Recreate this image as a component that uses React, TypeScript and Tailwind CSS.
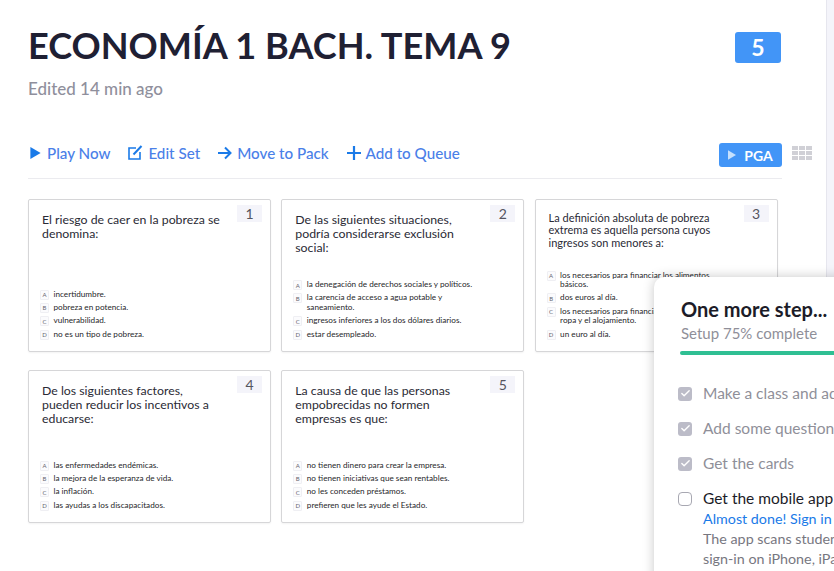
import React from 'react';
import { Check } from 'lucide-react';

type Card = {
  num: number;
  question: string;
  small?: boolean;
  answers: string[];
};

const cards: Card[] = [
  {
    num: 1,
    question: 'El riesgo de caer en la pobreza se denomina:',
    answers: ['incertidumbre.', 'pobreza en potencia.', 'vulnerabilidad.', 'no es un tipo de pobreza.'],
  },
  {
    num: 2,
    question: 'De las siguientes situaciones, podría considerarse exclusión social:',
    answers: [
      'la denegación de derechos sociales y políticos.',
      'la carencia de acceso a agua potable y saneamiento.',
      'ingresos inferiores a los dos dólares diarios.',
      'estar desempleado.',
    ],
  },
  {
    num: 3,
    small: true,
    question: 'La definición absoluta de pobreza extrema es aquella persona cuyos ingresos son menores a:',
    answers: [
      'los necesarios para financiar los alimentos básicos.',
      'dos euros al día.',
      'los necesarios para financiar los alimentos, la ropa y el alojamiento.',
      'un euro al día.',
    ],
  },
  {
    num: 4,
    question: 'De los siguientes factores, pueden reducir los incentivos a educarse:',
    answers: [
      'las enfermedades endémicas.',
      'la mejora de la esperanza de vida.',
      'la inflación.',
      'las ayudas a los discapacitados.',
    ],
  },
  {
    num: 5,
    question: 'La causa de que las personas empobrecidas no formen empresas es que:',
    answers: [
      'no tienen dinero para crear la empresa.',
      'no tienen iniciativas que sean rentables.',
      'no les conceden préstamos.',
      'prefieren que les ayude el Estado.',
    ],
  },
];

const PlayIcon = ({ className }: { className: string }) => (
  <svg viewBox="0 0 12 14" className={className} fill="currentColor">
    <path d="M0 0 L12 7 L0 14 Z" />
  </svg>
);

const EditIcon = () => (
  <svg viewBox="0 0 15 15" className="h-[15px] w-[15px] text-[#1a7ae8]" fill="none" stroke="currentColor">
    <path d="M8 3 H1 V14 H12 V7" strokeWidth="1.6" />
    <path d="M5.5 9.5 L13.5 1" strokeWidth="2" />
  </svg>
);

const ArrowIcon = () => (
  <svg viewBox="0 0 14 14" className="h-[14px] w-[14px] text-[#1a7ae8]" fill="none" stroke="currentColor" strokeWidth="2">
    <path d="M0 7 H12.5" />
    <path d="M7 1.5 L12.5 7 L7 12.5" />
  </svg>
);

const PlusIcon = () => (
  <svg viewBox="0 0 14 14" className="h-[14px] w-[14px] text-[#1a7ae8]" fill="none" stroke="currentColor" strokeWidth="2.2">
    <path d="M0 7 H14 M7 0 V14" />
  </svg>
);

const ActionLink = ({ icon, label, gap }: { icon: React.ReactNode; label: string; gap: string }) => (
  <div className={`flex items-center ${gap}`}>
    {icon}
    <span className="text-[15.2px] font-medium text-[#4a80e8]">{label}</span>
  </div>
);

const QuestionCard = ({ card }: { card: Card }) => (
  <div
    className={`relative flex h-[153px] w-[243px] flex-col justify-between rounded-[2px] border border-[#d6d6d8] bg-white pb-[12px] pl-[11px] shadow-[0_1px_2px_rgba(0,0,0,0.05)] ${
      card.small ? 'pt-[11.5px]' : 'pt-[13px]'
    }`}
  >
    <div className="absolute right-[8px] top-[5px] flex h-[17px] w-[25px] items-center justify-center bg-[#f4f4fa] text-[14px] text-[#55555f]">
      {card.num}
    </div>
    <p
      className={
        card.small
          ? 'ml-[2px] w-[182px] text-[11px] leading-[12.5px] text-[#2a2a35]'
          : 'ml-[2px] w-[182px] text-[12.3px] leading-[14px] text-[#2a2a35]'
      }
    >
      {card.question}
    </p>
    <div className="flex flex-col gap-[3.8px]">
      {card.answers.map((answer, i) => (
        <div key={i} className="flex items-start gap-[4.5px]">
          <span className="-mb-[1px] flex h-[10px] w-[9px] shrink-0 items-center justify-center rounded-[1px] border border-[#efeff3] bg-[#fbfbfd] text-[6px] text-[#66666f]">
            {'ABCD'[i]}
          </span>
          <span className="w-[172px] text-[8.2px] leading-[9.5px] text-[#1f1f2a]">{answer}</span>
        </div>
      ))}
    </div>
  </div>
);

const ChecklistItem = ({ label }: { label: string }) => (
  <div className="flex h-[35px] items-center gap-[11px]">
    <span className="flex h-[14px] w-[14px] shrink-0 items-center justify-center rounded-[3px] bg-[#bcbcc8]">
      <Check size={11} strokeWidth={3} className="text-white" />
    </span>
    <span className="whitespace-nowrap text-[15.5px] text-[#8f8f99]">{label}</span>
  </div>
);

const App: React.FC = () => {
  return (
    <div className="relative flex h-[571px] w-[834px] overflow-hidden bg-[#f4f4fa] font-['Lato',sans-serif]">
      <main className="h-full w-[827px] shrink-0 border-r border-[#e6e6ee] bg-white pl-[28px] pt-[23px]">
        <div className="flex w-[753px] items-start justify-between">
          <h1 className="whitespace-nowrap text-[36.15px] font-bold leading-[44px] text-[#1f2033]">ECONOMÍA 1 BACH. TEMA 9</h1>
          <div className="mt-[9px] flex h-[31px] w-[46px] items-center justify-center rounded-[3px] bg-[#4295f7] text-[23px] font-bold text-white">
            5
          </div>
        </div>
        <p className="mt-[11px] text-[17px] font-medium leading-[22px] text-[#8f8f9c]">Edited 14 min ago</p>

        <div className="mt-[40px] flex h-[39px] w-[754px] items-start justify-between border-b border-[#ebebef]">
          <div className="ml-[2px] flex h-[26px] items-center gap-[18px]">
            <ActionLink gap="gap-[6px]" icon={<PlayIcon className="h-[12px] w-[11px] text-[#1a7ae8]" />} label="Play Now" />
            <ActionLink gap="gap-[5px]" icon={<EditIcon />} label="Edit Set" />
            <ActionLink gap="gap-[5px]" icon={<ArrowIcon />} label="Move to Pack" />
            <ActionLink gap="gap-[5px]" icon={<PlusIcon />} label="Add to Queue" />
          </div>
          <div className="relative mt-[3px] flex h-[24px] w-[63px] items-center justify-center gap-[8px] rounded-[3px] bg-[#4295f7] text-[14px] font-bold text-white">
            <PlayIcon className="h-[10px] w-[8px] text-[#c5e0fd]" />
            PGA
            {/* grid view toggle */}
            <div className="absolute left-[73px] top-[3px] grid w-[20px] grid-cols-3 gap-px">
              {Array.from({ length: 9 }).map((_, i) => (
                <span key={i} className="h-[4px] w-[6px] bg-[#d0d0d6]" />
              ))}
            </div>
          </div>
        </div>

        <div className="mt-[20px] grid w-[760px] grid-cols-[243px_243px_243px] gap-x-[10.3px] gap-y-[18px]">
          {cards.map(card => (
            <QuestionCard key={card.num} card={card} />
          ))}
        </div>
      </main>

      {/* setup checklist popup, runs off the window */}
      <div className="absolute left-[654px] top-[277px] h-[320px] w-[300px] rounded-tl-[10px] bg-white pl-[27px] pt-[20px] shadow-[0_0_12px_rgba(0,0,0,0.22)]">
        <h2 className="whitespace-nowrap text-[20px] font-bold leading-[24px] text-[#1c1c28]">One more step...</h2>
        <p className="mt-[2px] text-[15px] leading-[20px] text-[#8f8f99]">Setup 75% complete</p>
        <div className="-ml-px mt-[8px] h-[4px] w-full rounded-l-full bg-[#2fbf93]" />
        <div className="-ml-[3px] mt-[21px] flex flex-col">
          <ChecklistItem label="Make a class and add students" />
          <ChecklistItem label="Add some questions" />
          <ChecklistItem label="Get the cards" />
        </div>
        <div className="-ml-[3px] mt-[7px] flex items-start gap-[11px]">
          <span className="mt-[4px] h-[14px] w-[14px] shrink-0 rounded-[4px] border border-[#a8a8b2] bg-white" />
          <div className="whitespace-nowrap text-[14.3px] leading-[20px]">
            <p className="mb-px text-[15.5px] text-[#1c1c28]">Get the mobile app</p>
            <p className="text-[#1a7ae8]">Almost done! Sign in to finish</p>
            <p className="text-[#77777f]">The app scans student cards</p>
            <p className="text-[#77777f]">sign-in on iPhone, iPad</p>
          </div>
        </div>
      </div>
    </div>
  );
};

export default App;
